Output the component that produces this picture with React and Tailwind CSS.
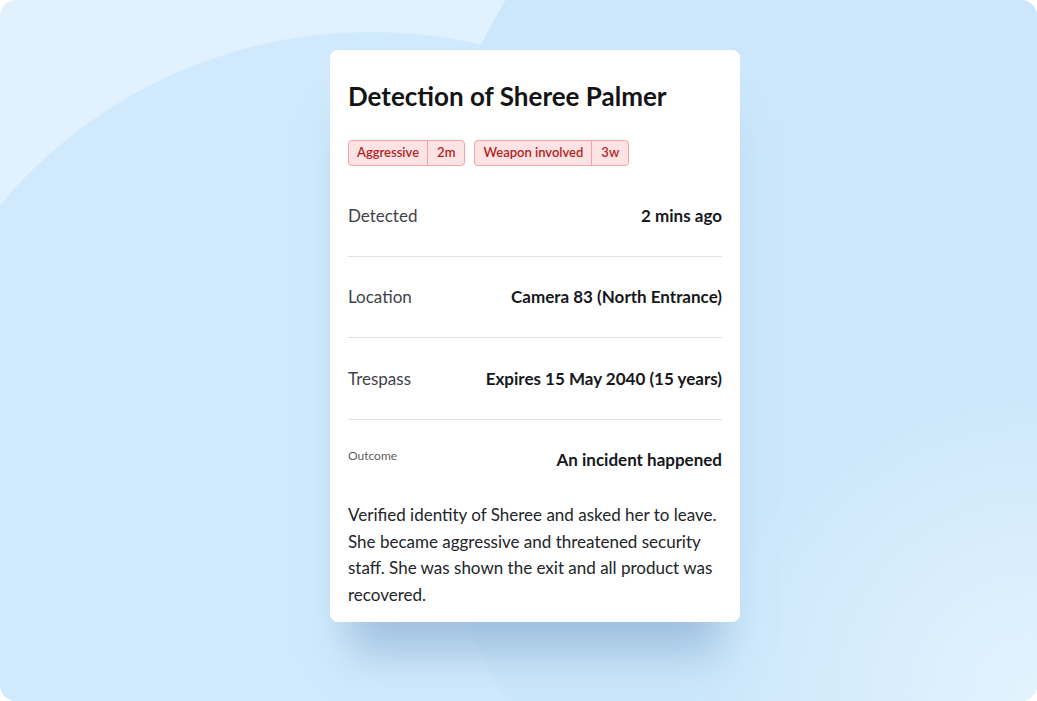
import React from 'react';

const rows = [
  { label: 'Detected', value: '2 mins ago' },
  { label: 'Location', value: 'Camera 83 (North Entrance)' },
  { label: 'Trespass', value: 'Expires 15 May 2040 (15 years)' },
];

const tags = [
  { name: 'Aggressive', age: '2m' },
  { name: 'Weapon involved', age: '3w' },
];

function Tag({ name, age }) {
  return (
    <div className="flex h-[26px] items-stretch rounded-[4px] border border-[#f5a3a3] bg-[#fde3e3] text-[13px] font-semibold text-[#b42323]">
      <span className="flex items-center px-[8px]">{name}</span>
      <span className="flex items-center border-l border-[#f5a3a3] px-[9px]">{age}</span>
    </div>
  );
}

export default function App() {
  return (
    <div className="h-[701px] w-[1037px] overflow-hidden rounded-[16px] bg-[#e1f2fe] font-['Lato',sans-serif]">
      {/* soft background circles */}
      <div className="flex h-full w-full bg-[radial-gradient(circle_at_1037px_701px,rgba(228,244,254,0.95)_0px,rgba(228,244,254,0)_330px),radial-gradient(circle_at_1100px_350px,#cce7fb_689px,transparent_691px),radial-gradient(circle_at_371px_516px,#d0e9fc_483px,transparent_485px)] pl-[330px] pt-[50px]">
        <div className="flex h-[572px] w-[410px] flex-col rounded-[8px] bg-white px-[18px] pt-[30px] shadow-[0_50px_40px_-20px_rgba(120,160,200,0.55)]">
          <h1 className="text-[26px] font-bold leading-[32px] text-[#141414]">Detection of Sheree Palmer</h1>
          <div className="mt-[28px] flex gap-[9px]">
            {tags.map(t => <Tag key={t.name} {...t} />)}
          </div>
          <div className="mt-[9px] flex flex-col">
            {rows.map(r => (
              <div key={r.label} className="flex h-[81.5px] items-center justify-between border-b border-[#e2e2e2] text-[17px]">
                <span className="text-[#3f4349]">{r.label}</span>
                <span className="font-bold text-[#16181c]">{r.value}</span>
              </div>
            ))}
          </div>
          <div className="flex justify-between pt-[27px]">
            <span className="text-[12px] text-[#5a5e64]">Outcome</span>
            <span className="text-[17px] font-bold text-[#16181c]">An incident happened</span>
          </div>
          <p className="mt-[30px] text-[17px] leading-[26.7px] text-[#222529]">
            Verified identity of Sheree and asked her to leave. She became aggressive and threatened security staff. She was shown the exit and all product was recovered.
          </p>
        </div>
      </div>
    </div>
  );
}
